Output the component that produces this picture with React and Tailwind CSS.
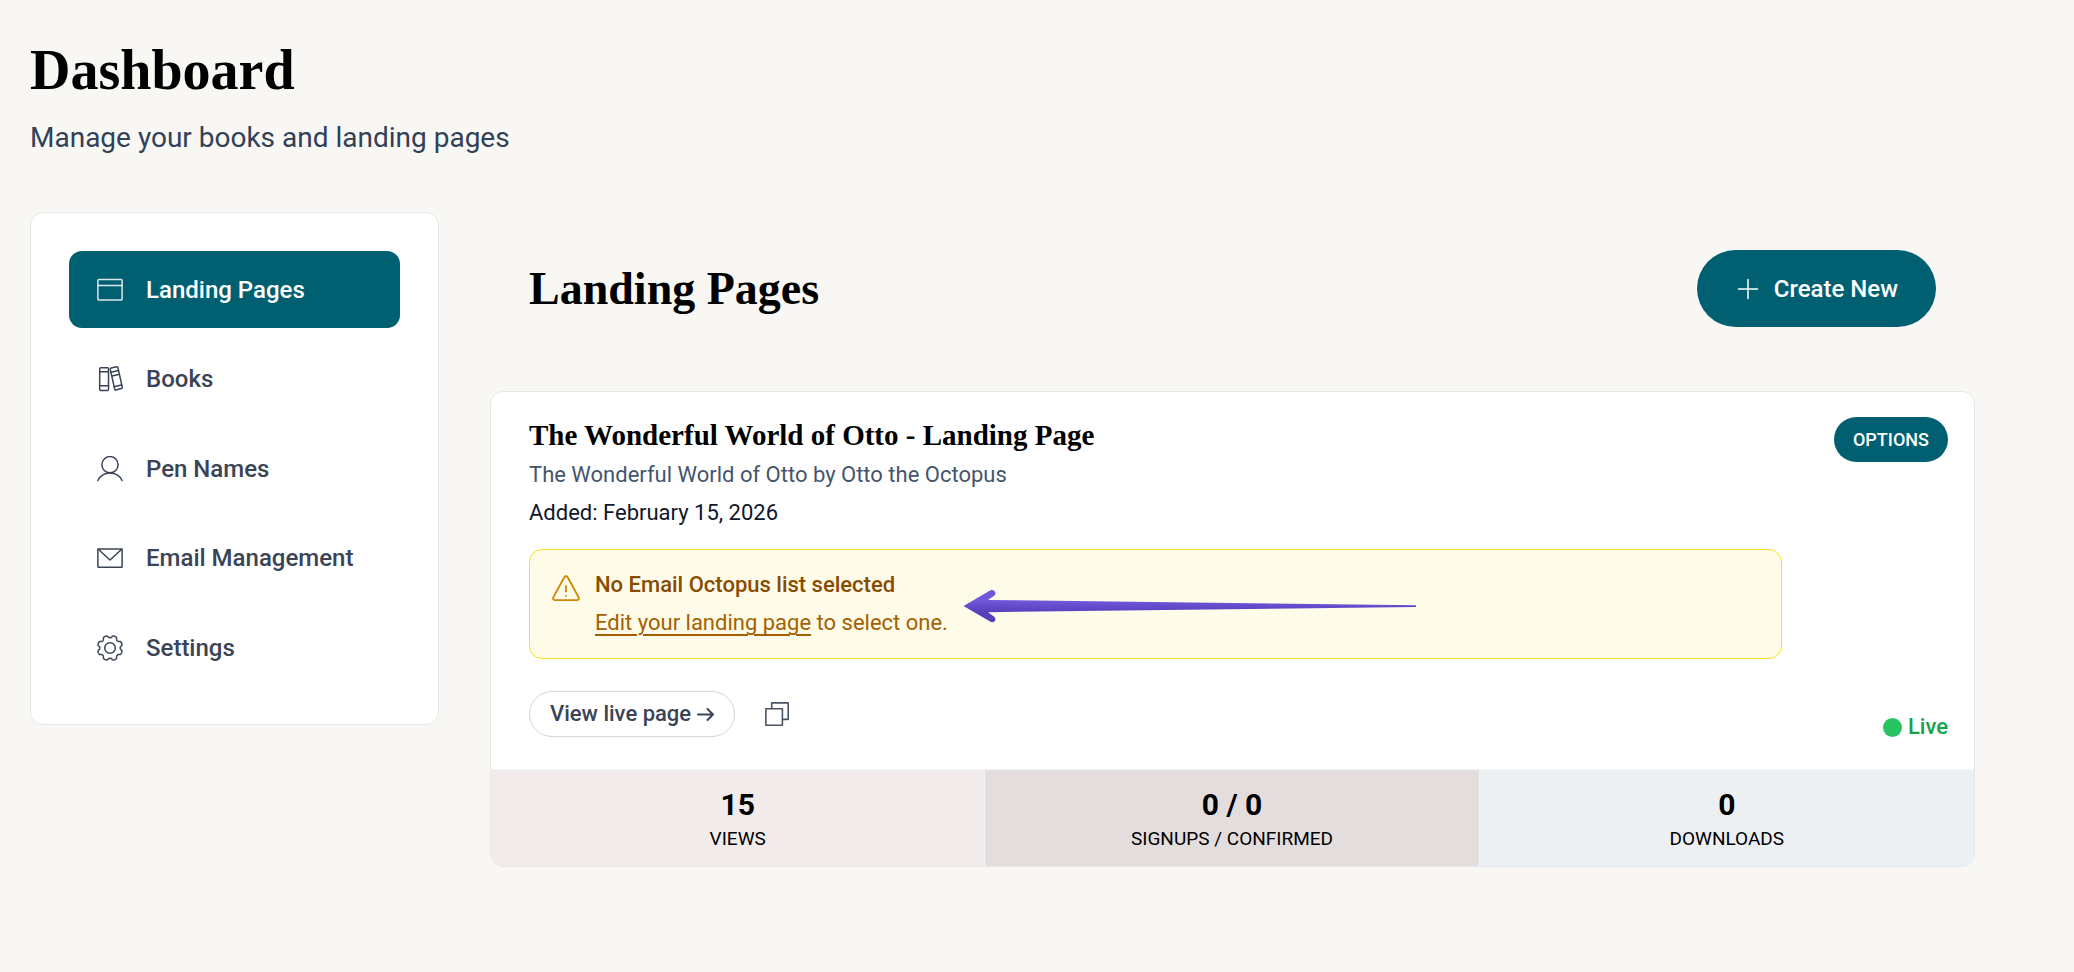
import React from "react";

const SERIF = "font-['Liberation_Serif','Times_New_Roman',serif]";

const stroke = {
  fill: "none",
  stroke: "currentColor",
  strokeWidth: 1.5,
  strokeLinecap: "round",
  strokeLinejoin: "round",
  "aria-hidden": true,
};

function WindowIcon() {
  return (
    <svg {...stroke} viewBox="0 0 26 26" className="size-[26px] shrink-0 text-white/85">
      <rect x="0.9" y="2.4" width="24.2" height="20.6" rx="1" />
      <path d="M1 8.5h24" />
    </svg>
  );
}

function BooksIcon() {
  return (
    <svg {...stroke} viewBox="0 0 26 26" className="size-[26px] shrink-0">
      <rect x="2.7" y="1.8" width="8.8" height="22.6" rx="1" />
      <path d="M2.7 5.7h8.8M2.7 19.7h8.8" />
      <path d="M14.1 2.1l5.6-1.3a1 1 0 0 1 1.2.8l4.4 19.8a1 1 0 0 1-.8 1.2l-5.6 1.3a1 1 0 0 1-1.2-.8L13.3 3.3a1 1 0 0 1 .8-1.2z" />
      <path d="M14.1 6.3l7.4-1.7M15 10l7.4-1.7M17 20.7l7.5-1.7" />
    </svg>
  );
}

function PersonIcon() {
  return (
    <svg {...stroke} viewBox="0 0 26 26" className="size-[26px] shrink-0">
      <circle cx="13" cy="8.7" r="8.1" />
      <path d="M0.9 24.5a13.6 13.6 0 0 1 24.2 0" />
    </svg>
  );
}

function MailIcon() {
  return (
    <svg {...stroke} viewBox="0 0 26 26" className="size-[26px] shrink-0">
      <rect x="0.9" y="3.9" width="24.2" height="18.4" rx="0.6" />
      <path d="M1.3 4.2L13 15 24.7 4.2" />
    </svg>
  );
}

// Outline of an eight-toothed cog, sampled around the circle.
const cogPath =
  Array.from({ length: 160 }, (_, i) => {
    const a = (i / 160) * Math.PI * 2;
    const r = 11.3 + 1.2 * (Math.tanh(-1.8 * Math.cos(8 * a) + 0.5) / Math.tanh(1.8));
    const x = (13 + r * Math.cos(a)).toFixed(2);
    const y = (13 + r * Math.sin(a)).toFixed(2);
    return `${i ? "L" : "M"}${x} ${y}`;
  }).join("") + "Z";

function CogIcon() {
  return (
    <svg {...stroke} viewBox="0 0 26 26" className="size-[26px] shrink-0">
      <path d={cogPath} />
      <circle cx="13" cy="13" r="5.3" />
    </svg>
  );
}

function PlusIcon() {
  return (
    <svg {...stroke} viewBox="0 0 26 26" className="size-[26px] shrink-0">
      <path d="M13 3.5v19M3.5 13h19" />
    </svg>
  );
}

function WarningIcon() {
  return (
    <svg {...stroke} strokeWidth={1.8} viewBox="0 0 28 28" className="mt-[5px] size-7 shrink-0 text-[#d08700]">
      <path d="M12.3 3.2a2 2 0 0 1 3.4 0l11 20.2a1.9 1.9 0 0 1-1.7 2.8H3a1.9 1.9 0 0 1-1.7-2.8z" />
      <path d="M14 12v5.500M14 21.800v.2" />
    </svg>
  );
}

function ArrowRightIcon() {
  return (
    <svg {...stroke} strokeWidth={2} viewBox="0 0 17 14" className="h-3.5 w-[17px] shrink-0">
      <path d="M1 7.500h15M10.500 2l5.500 5.500-5.500 5.500" />
    </svg>
  );
}

function CopyIcon() {
  return (
    <svg {...stroke} strokeWidth={1.6} viewBox="0 0 24 24" className="size-6">
      <rect x="0.9" y="6.7" width="16.5" height="16.5" />
      <path d="M6.7 6.5V0.9H23.2V17.4H17.6" />
    </svg>
  );
}

function PointerArrow() {
  return (
    <svg
      viewBox="0 0 453 34"
      aria-hidden="true"
      className="absolute left-[433px] top-[39px] h-[34px] w-[453px]"
    >
      <defs>
        <linearGradient id="arrow" x1="0" y1="0" x2="0" y2="1">
          <stop offset="0.35" stopColor="#6e57d8" />
          <stop offset="0.7" stopColor="#563fbd" />
        </linearGradient>
      </defs>
      <path
        fill="url(#arrow)"
        d="M0.5 17L27.5 1.3C31 -0.3 34 3.5 31.5 6.5L25 11L453 16.200V18L25 23.200L31.500 28C34 31 31 34.500 27.500 32.800Z"
      />
    </svg>
  );
}

const navItems = [
  { label: "Landing Pages", Icon: WindowIcon, active: true },
  { label: "Books", Icon: BooksIcon },
  { label: "Pen Names", Icon: PersonIcon },
  { label: "Email Management", Icon: MailIcon },
  { label: "Settings", Icon: CogIcon },
];

const stats = [
  { value: "15", label: "VIEWS", tone: "bg-[#f2ebeb]" },
  { value: "0 / 0", label: "SIGNUPS / CONFIRMED", tone: "bg-[#e4dddd]" },
  { value: "0", label: "DOWNLOADS", tone: "bg-[#edf0f3]" },
];

function Sidebar() {
  return (
    <nav
      aria-label="Dashboard"
      className="w-[409px] shrink-0 rounded-[13px] border border-[#e5e7eb] bg-white p-[38px]"
    >
      <ul className="flex min-h-[435px] flex-col justify-between">
        {navItems.map(({ label, Icon, active }) => (
          <li key={label}>
            <a
              href="#"
              aria-current={active ? "page" : undefined}
              className={
                "flex h-[77px] items-center gap-[23px] rounded-[13px] px-7 text-[24px] font-medium " +
                (active ? "bg-[#006072] text-white" : "text-[#3a4456]")
              }
            >
              <Icon />
              {label}
            </a>
          </li>
        ))}
      </ul>
    </nav>
  );
}

function LandingPageCard() {
  return (
    <article className="overflow-hidden rounded-[13px] border border-[#e5e7eb] bg-white">
      <div className="flex gap-[52px] pt-[25px] pr-[26px] pb-[26px] pl-[38px]">
        <div className="min-w-0 flex-1 pb-1.5 text-[22px] leading-8">
          <h3 className={`${SERIF} text-[29px] leading-9 font-bold text-black`}>
            The Wonderful World of Otto - Landing Page
          </h3>
          <p className="mt-1.5 text-[#45556c]">The Wonderful World of Otto by Otto the Octopus</p>
          <p className="mt-1.5 text-[#0f172b]">Added: February 15, 2026</p>

          <div
            role="alert"
            className="relative mt-5 flex gap-[15px] rounded-[13px] border border-[#ffdf20] bg-[#fefce8] px-[22px] py-[19px]"
          >
            <WarningIcon />
            <div>
              <p className="font-medium text-[#894b00]">No Email Octopus list selected</p>
              <p className="mt-1.5 text-[#a65f00]">
                <a href="#" className="underline decoration-2 underline-offset-4">
                  Edit your landing page
                </a>{" "}
                to select one.
              </p>
            </div>
            <PointerArrow />
          </div>

          <div className="mt-8 flex items-center gap-[30px]">
            <a
              href="#"
              className="flex items-center gap-1.5 rounded-full border border-[#d1d5dc] px-5 py-1.5 font-medium text-[#3a4456]"
            >
              View live page
              <ArrowRightIcon />
            </a>
            <button type="button" aria-label="Copy link" className="text-[#4a5565]">
              <CopyIcon />
            </button>
          </div>
        </div>

        <div className="flex flex-col items-end justify-between">
          <button
            type="button"
            className="rounded-full bg-[#006072] px-[19px] text-[18px] leading-[45px] font-medium text-white"
          >
            OPTIONS
          </button>
          <p className="flex items-center gap-1.5 text-[22px] leading-8 font-medium text-[#16a34a]">
            <span className="size-[19px] rounded-full bg-[#27c562]" />
            Live
          </p>
        </div>
      </div>

      <dl className="grid grid-cols-3 divide-x divide-[#f3f4f6] border-t border-[#f3f4f6]">
        {stats.map(({ value, label, tone }) => (
          <div key={label} className={`flex flex-col-reverse pt-[17px] pb-[11px] text-center text-black ${tone}`}>
            <dt className="text-[19px] leading-8">{label}</dt>
            <dd className="text-[30px] leading-9 font-bold">{value}</dd>
          </div>
        ))}
      </dl>
    </article>
  );
}

export default function App() {
  return (
    <div className="min-h-screen bg-[#f8f7f3] pt-[38px] pr-[99px] pb-12 pl-[30px] font-[Roboto,sans-serif]">
      <header>
        <h1 className={`${SERIF} text-[56px] leading-[64px] font-bold text-black`}>Dashboard</h1>
        <p className="mt-4 text-[28px] leading-10 text-[#314158]">Manage your books and landing pages</p>
      </header>

      <div className="mt-[54px] flex items-start gap-[51px]">
        <Sidebar />
        <main className="min-w-0 flex-1">
          <div className="flex items-center justify-between px-[39px] pt-[38px] pb-16">
            <h2 className={`${SERIF} text-[46px] leading-[64px] font-bold text-black`}>Landing Pages</h2>
            <button
              type="button"
              className="flex h-[77px] items-center gap-[13px] rounded-full bg-[#006072] px-[38px] text-[24px] font-medium text-white"
            >
              <PlusIcon />
              Create New
            </button>
          </div>
          <LandingPageCard />
        </main>
      </div>
    </div>
  );
}
